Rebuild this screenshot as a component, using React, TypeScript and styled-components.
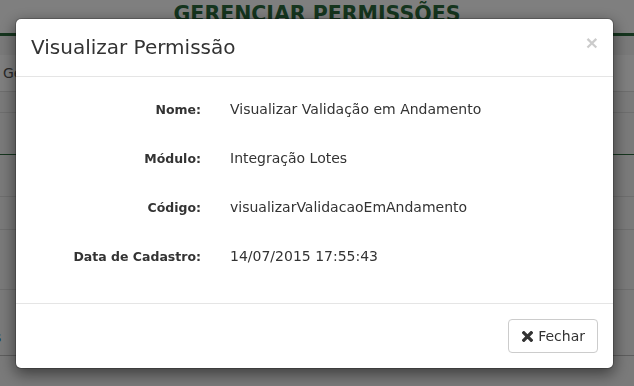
import styled, { createGlobalStyle } from "styled-components";

const GlobalStyle = createGlobalStyle`
  html, body {
    margin: 0;
    padding: 0;
    background: #ffffff;
    font-family: "DejaVu Sans", "Open Sans", sans-serif;
    color: #333333;
  }
  * {
    box-sizing: border-box;
  }
`;

const Page = styled.div`
  width: 634px;
  height: 386px;
  overflow: hidden;
  background: #f4f4f4;
`;

const PageHeader = styled.header`
  height: 36px;
  background: #ffffff;
  border-bottom: 3px solid #2b6a3c;
  display: flex;
  justify-content: center;
  padding-top: 1px;
`;

const PageTitle = styled.h1`
  margin: 0;
  font-size: 20.5px;
  line-height: 26px;
  font-weight: bold;
  color: #2b6a3c;
`;

const Breadcrumb = styled.div`
  margin-top: 19px;
  height: 37px;
  background: #ffffff;
  border-bottom: 1px solid #dddddd;
  display: flex;
  align-items: center;
  padding-left: 3px;
  font-size: 14px;
  color: #555555;
`;

const TableRow = styled.div<{ $h: number; $line?: string }>`
  height: ${(p) => p.$h}px;
  border-bottom: 1px solid ${(p) => p.$line ?? "#dddddd"};
  background: #f4f4f4;
  display: flex;
  align-items: flex-end;
  padding-bottom: 10px;
  font-size: 14px;
`;

const LinkText = styled.span`
  color: #1a6fb3;
  margin-left: -6px;
`;

const Backdrop = styled.div`
  position: fixed;
  inset: 0;
  background: rgba(0, 0, 0, 0.5);
  padding: 18px 0 0 15px;
`;

const Dialog = styled.div`
  width: 599px;
  background: #ffffff;
  border: 1px solid rgba(0, 0, 0, 0.2);
  border-radius: 6px;
  box-shadow: 0 5px 15px rgba(0, 0, 0, 0.5);
  background-clip: padding-box;
`;

const DialogHeader = styled.div`
  display: flex;
  justify-content: space-between;
  align-items: flex-start;
  padding: 15px;
  border-bottom: 1px solid #e5e5e5;
`;

const DialogTitle = styled.h4`
  margin: 0;
  font-size: 20px;
  line-height: 27px;
  font-weight: normal;
  color: #333333;
`;

const CloseButton = styled.button`
  border: 0;
  background: transparent;
  padding: 0;
  margin-top: -2px;
  font-family: "Liberation Sans", Arial, sans-serif;
  font-size: 21px;
  font-weight: bold;
  line-height: 1;
  color: #000000;
  opacity: 0.2;
  cursor: pointer;
`;

const DialogBody = styled.div`
  padding: 15px;
  display: grid;
  grid-template-columns: 170px 1fr;
  column-gap: 29px;
  row-gap: 15px;
  padding-bottom: 30px;
`;

const FieldLabel = styled.div`
  height: 34px;
  display: flex;
  align-items: center;
  justify-content: flex-end;
  font-size: 12.5px;
  font-weight: bold;
  color: #333333;
`;

const FieldValue = styled.div`
  height: 34px;
  display: flex;
  align-items: center;
  font-size: 14px;
  color: #333333;
`;

const DialogFooter = styled.div`
  display: flex;
  justify-content: flex-end;
  padding: 15px;
  border-top: 1px solid #e5e5e5;
`;

const DefaultButton = styled.button`
  height: 34px;
  display: inline-flex;
  align-items: center;
  gap: 5px;
  padding: 6px 12px 6px 13px;
  border: 1px solid #cccccc;
  border-radius: 4px;
  background: #ffffff;
  font-family: "DejaVu Sans", "Open Sans", sans-serif;
  font-size: 14px;
  color: #333333;
  cursor: pointer;
`;

const RemoveIcon = () => (
  <svg width="11" height="11" viewBox="0 0 12 12" aria-hidden="true">
    <path
      d="M2 2 L10 10 M10 2 L2 10"
      stroke="#333333"
      strokeWidth="3.6"
      strokeLinecap="square"
      fill="none"
    />
  </svg>
);

const fields = [
  { label: "Nome:", value: "Visualizar Validação em Andamento" },
  { label: "Módulo:", value: "Integração Lotes" },
  { label: "Código:", value: "visualizarValidacaoEmAndamento" },
  { label: "Data de Cadastro:", value: "14/07/2015 17:55:43" },
];

export default function App() {
  return (
    <>
      <GlobalStyle />
      <Page>
        <PageHeader>
          <PageTitle>GERENCIAR PERMISSÕES</PageTitle>
        </PageHeader>
        <Breadcrumb>Gerenciar Permissões</Breadcrumb>
        <TableRow $h={21} />
        <TableRow $h={42} $line="#2b6a3c" />
        <TableRow $h={42} />
        <TableRow $h={33} />
        <TableRow $h={60} />
        <TableRow $h={66} $line="#bbbbbb">
          <LinkText>s</LinkText>
        </TableRow>
      </Page>
      <Backdrop>
        <Dialog>
          <DialogHeader>
            <DialogTitle>Visualizar Permissão</DialogTitle>
            <CloseButton type="button">×</CloseButton>
          </DialogHeader>
          <DialogBody>
            {fields.map((f) => (
              <>
                <FieldLabel key={f.label + "l"}>{f.label}</FieldLabel>
                <FieldValue key={f.label + "v"}>{f.value}</FieldValue>
              </>
            ))}
          </DialogBody>
          <DialogFooter>
            <DefaultButton type="button">
              <RemoveIcon />
              Fechar
            </DefaultButton>
          </DialogFooter>
        </Dialog>
      </Backdrop>
    </>
  );
}
